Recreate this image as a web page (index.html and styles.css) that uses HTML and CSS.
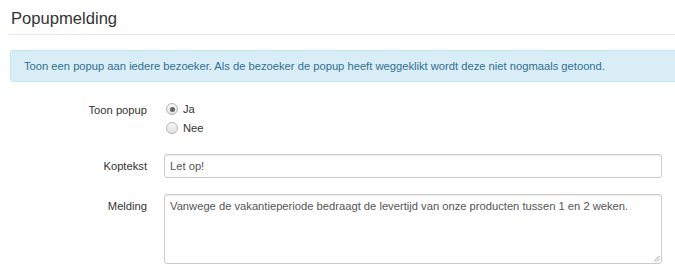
FILE: index.html
```html
<!DOCTYPE html>
<html lang="nl">
<head>
<meta charset="utf-8">
<title>Popupmelding</title>
<link rel="stylesheet" href="styles.css">
</head>
<body>
<div class="page">
  <h1 class="title">Popupmelding</h1>
  <div class="alert">Toon een popup aan iedere bezoeker. Als de bezoeker de popup heeft weggeklikt wordt deze niet nogmaals getoond.</div>
  <form class="form">
    <div class="row row-radio">
      <div class="label">Toon popup</div>
      <div class="radios">
        <label class="radio"><span class="dot checked"></span>Ja</label>
        <label class="radio"><span class="dot"></span>Nee</label>
      </div>
    </div>
    <div class="row row-input">
      <div class="label">Koptekst</div>
      <div class="field input">Let op!</div>
    </div>
    <div class="row row-area">
      <div class="label">Melding</div>
      <div class="field area">Vanwege de vakantieperiode bedraagt de levertijd van onze producten tussen 1 en 2 weken.
        <svg class="grip" width="7" height="7" viewBox="0 0 7 7"><path d="M6.5 1 L1 6.5 M6.5 4 L4 6.5" stroke="#9a9a9a" stroke-width="1"/></svg>
      </div>
    </div>
  </form>
</div>
</body>
</html>
```

FILE: styles.css
```css
html, body {
  margin: 0;
  padding: 0;
  background: #fff;
  overflow: hidden;
}
body {
  font-family: "Liberation Sans", Arial, sans-serif;
  font-size: 11.2px;
  color: #333;
}
.page {
  padding-left: 10px;
  width: 675px;
}
.title {
  margin: 9px 0 0 0;
  padding: 0 0 5px 1px;
  font-size: 16.6px;
  line-height: 20px;
  font-weight: normal;
  color: #333;
  border-bottom: 1px solid #e5e5e5;
}
.alert {
  margin-top: 15px;
  background: #d9edf7;
  border: 1px solid #bce8f1;
  border-radius: 3px;
  color: #31708f;
  padding: 7px 13px;
  line-height: 16px;
  height: 16px;
  white-space: nowrap;
}
.form {
  margin-top: 19px;
  display: flex;
  flex-direction: column;
}
.row {
  display: grid;
  grid-template-columns: 137px 498px;
  column-gap: 17px;
}
.label {
  text-align: right;
  line-height: 16px;
}
.row-radio .label {
  padding-top: 1px;
}
.radios {
  display: flex;
  flex-direction: column;
  gap: 3px;
}
.radio {
  display: flex;
  align-items: center;
  height: 16px;
  line-height: 16px;
}
.dot {
  box-sizing: border-box;
  width: 12px;
  height: 12px;
  border-radius: 50%;
  border: 1px solid #b5b5b5;
  background: linear-gradient(#f6f6f6, #e2e2e2);
  margin: 0 5px 0 2px;
  position: relative;
}
.dot.checked::after {
  content: "";
  position: absolute;
  left: 2.5px;
  top: 2.5px;
  width: 5px;
  height: 5px;
  border-radius: 50%;
  background: #666;
}
.row-input {
  margin-top: 18px;
}
.row-input .label {
  padding-top: 4px;
}
.field {
  box-sizing: border-box;
  border: 1px solid #ccc;
  border-radius: 3px;
  box-shadow: inset 0 1px 1px rgba(0,0,0,0.075);
  color: #555;
  background: #fff;
}
.input {
  height: 24px;
  padding: 3px 5px;
  line-height: 16px;
}
.row-area {
  margin-top: 16px;
}
.row-area .label {
  padding-top: 4px;
}
.area {
  height: 70px;
  padding: 3px 5px;
  line-height: 16px;
  position: relative;
}
.grip {
  position: absolute;
  right: 1px;
  bottom: 1px;
}
```
